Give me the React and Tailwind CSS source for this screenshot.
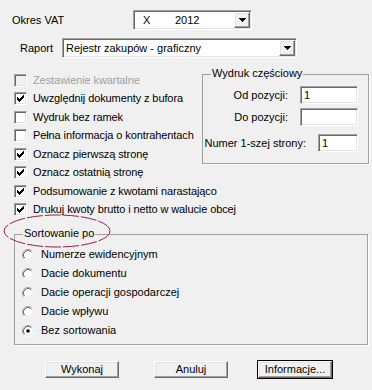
import React from "react";

const sunken =
  "bg-white border border-t-[#a0a0a0] border-l-[#a0a0a0] border-b-white border-r-white shadow-[inset_1px_1px_0_#696969,inset_-1px_-1px_0_#e3e3e3]";
const raised =
  "bg-[#f0f0f0] border border-t-white border-l-white border-b-[#696969] border-r-[#696969] shadow-[inset_-1px_-1px_0_#a0a0a0,inset_1px_1px_0_#e3e3e3]";

const Arrow = () => (
  <div className={`${raised} w-[16px] h-[16px] flex items-center justify-center`}>
    <svg width="7" height="4" viewBox="0 0 7 4" shapeRendering="crispEdges">
      <path d="M0 0h7v1H0zM1 1h5v1H1zM2 2h3v1H2zM3 3h1v1H3z" fill="#000" />
    </svg>
  </div>
);

const Combo = ({ className, children }) => (
  <div className={`${sunken} ${className} h-[20px] flex items-center pl-[1px] pr-[1px]`}>
    <div className="flex-1 flex items-center">{children}</div>
    <Arrow />
  </div>
);

const Check = ({ checked, disabled }) => (
  <div
    className={`w-[13px] h-[13px] shrink-0 border border-t-[#a0a0a0] border-l-[#a0a0a0] border-b-white border-r-white shadow-[inset_1px_1px_0_#696969,inset_-1px_-1px_0_#e3e3e3] ${
      disabled ? "bg-[#f0f0f0]" : "bg-white"
    }`}
  >
    {checked && (
      <svg width="11" height="11" viewBox="0 0 11 11" shapeRendering="crispEdges">
        <path
          d="M2 4h1v3H2zM3 5h1v3H3zM4 6h1v3H4zM5 5h1v3H5zM6 4h1v3H6zM7 3h1v3H7zM8 2h1v3H8z"
          fill="#000"
        />
      </svg>
    )}
  </div>
);

const Radio = ({ checked }) => (
  <svg width="12" height="12" viewBox="0 0 12 12" className="shrink-0">
    <circle cx="6" cy="6" r="5" fill="#fff" />
    <path d="M2.11 9.89A5.5 5.5 0 0 1 9.89 2.11" stroke="#a0a0a0" fill="none" />
    <path d="M9.89 2.11A5.5 5.5 0 0 1 2.11 9.89" stroke="#fff" fill="none" />
    <path d="M2.82 9.18A4.5 4.5 0 0 1 9.18 2.82" stroke="#696969" fill="none" />
    <path d="M9.18 2.82A4.5 4.5 0 0 1 2.82 9.18" stroke="#e3e3e3" fill="none" />
    {checked && <circle cx="6" cy="6" r="1.8" fill="#000" />}
  </svg>
);

const checks = [
  ["Zestawienie kwartalne", false, true],
  ["Uwzględnij dokumenty z bufora", true],
  ["Wydruk bez ramek", false],
  ["Pełna informacja o kontrahentach", false],
  ["Oznacz pierwszą stronę", true],
  ["Oznacz ostatnią stronę", true],
  ["Podsumowanie z kwotami narastająco", true],
  ["Drukuj kwoty brutto i netto w walucie obcej", true],
];

const sorts = [
  ["Numerze ewidencyjnym", false],
  ["Dacie dokumentu", false],
  ["Dacie operacji gospodarczej", false],
  ["Dacie wpływu", false],
  ["Bez sortowania", true],
];

const Button = ({ children, isDefault }) => (
  <div className={isDefault ? "border border-black" : "p-[1px]"}>
    <div className={`${raised} w-[74px] h-[17px] flex items-center justify-center`}>{children}</div>
  </div>
);

export default function App() {
  return (
    <div className="relative w-[372px] h-[390px] bg-[#f0f0f0] text-black text-[11px] leading-none font-['Liberation_Sans',Arial,sans-serif] flex flex-col pt-[10px] overflow-hidden">
      <div className="flex items-center h-[20px]">
        <span className="pl-[12px] w-[133px]">Okres VAT</span>
        <Combo className="w-[119px]">
          <span className="pl-[8px] w-[40px]">X</span>
          <span>2012</span>
        </Combo>
      </div>

      <div className="flex items-center h-[20px] mt-[8px]">
        <span className="pl-[20px] w-[62px]">Raport</span>
        <Combo className="w-[235px]">
          <span className="pl-[2px]">Rejestr zakupów - graficzny</span>
        </Combo>
      </div>

      <div className="flex mt-[13px]">
        <div className="flex flex-col w-[202px] pl-[14px]">
          {checks.map(([label, checked, disabled]) => (
            <div key={label} className="flex items-center h-[18.5px] gap-[6px] whitespace-nowrap tracking-[-0.1px]">
              <Check checked={checked} disabled={disabled} />
              <span className={disabled ? "text-[#a0a0a0]" : ""}>{label}</span>
            </div>
          ))}
        </div>

        <div className="relative mt-[3px] w-[167px] h-[90px] border border-[#a0a0a0] shadow-[1px_1px_0_#fff] flex flex-col items-end pt-[11px] pr-[10px]">
          <span className="absolute -top-[7px] left-[8px] px-[1px] bg-[#f0f0f0]">Wydruk częściowy</span>
          <div className="flex items-center gap-[12px]">
            <span>Od pozycji:</span>
            <div className={`${sunken} w-[58px] h-[18px] flex items-center pl-[3px]`}>1</div>
          </div>
          <div className="flex items-center gap-[12px] mt-[4px]">
            <span>Do pozycji:</span>
            <div className={`${sunken} w-[58px] h-[18px]`} />
          </div>
          <div className="flex items-center gap-[12px] mt-[8px]">
            <span>Numer 1-szej strony:</span>
            <div className={`${sunken} w-[40px] h-[18px] flex items-center pl-[3px]`}>1</div>
          </div>
        </div>
      </div>

      <div className="relative ml-[14px] mt-[15px] w-[354px] h-[111px] border border-[#a0a0a0] shadow-[1px_1px_0_#fff] flex flex-col pt-[10px] pl-[7px]">
        <span className="absolute -top-[7px] left-[8px] px-[1px] bg-[#f0f0f0]">Sortowanie po</span>
        {sorts.map(([label, checked]) => (
          <div key={label} className="flex items-center h-[19px] gap-[7px]">
            <Radio checked={checked} />
            <span>{label}</span>
          </div>
        ))}
      </div>

      <div className="flex mt-[15px] pl-[44px] gap-[33px]">
        <Button>Wykonaj</Button>
        <Button>Anuluj</Button>
        <div className="-ml-[5px]">
          <Button isDefault>Informacje...</Button>
        </div>
      </div>

      <svg
        className="absolute left-[2px] top-[213px]"
        width="110"
        height="36"
        viewBox="0 0 110 36"
      >
        <ellipse
          cx="55"
          cy="18"
          rx="53"
          ry="16"
          fill="none"
          stroke="#a01c4c"
          strokeWidth="1"
          strokeDasharray="16 2"
        />
      </svg>
    </div>
  );
}
